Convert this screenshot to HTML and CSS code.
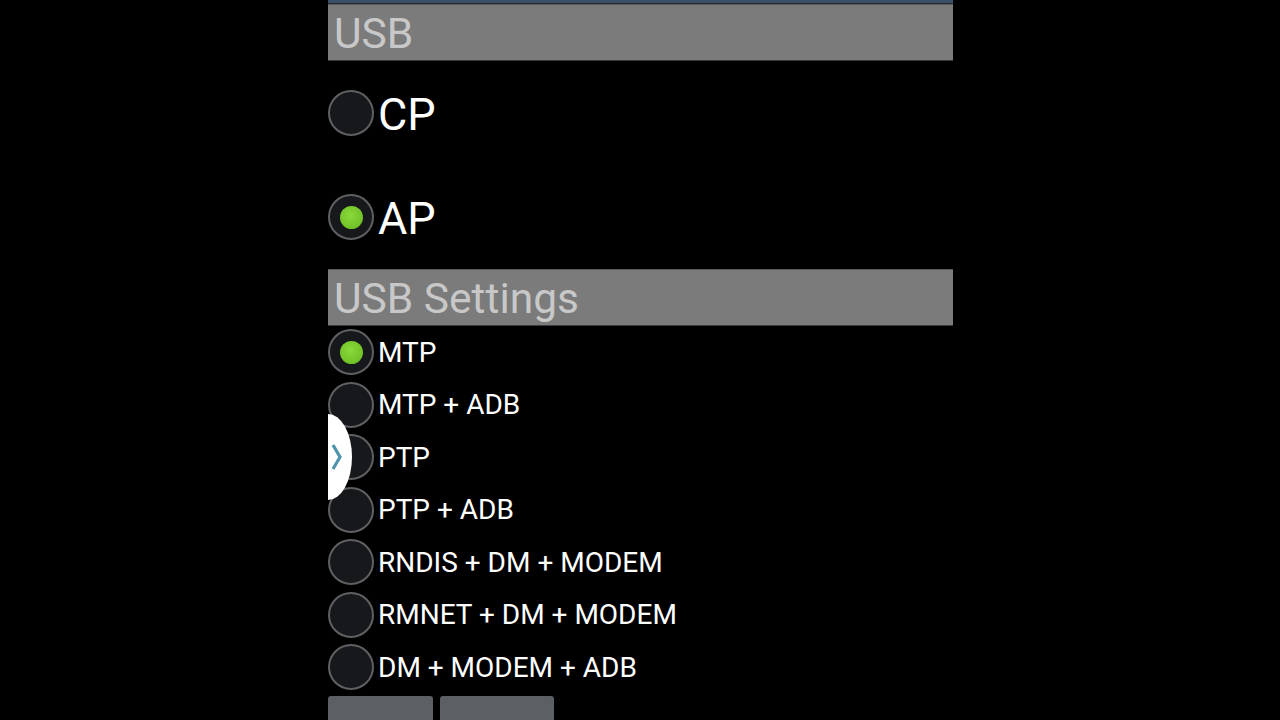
FILE: index.html
```html
<!DOCTYPE html>
<html>
<head>
<meta charset="utf-8">
<link rel="stylesheet" href="styles.css">
</head>
<body>
<div class="screen">
  <div class="topbar"></div>
  <div class="section-header">USB</div>
  <div class="big-row"><span class="radio"></span><span class="big-label">CP</span></div>
  <div class="big-row"><span class="radio checked"></span><span class="big-label">AP</span></div>
  <div class="section-header">USB Settings</div>
  <div class="list">
    <div class="row"><span class="radio checked"></span><span class="label">MTP</span></div>
    <div class="row"><span class="radio"></span><span class="label">MTP + ADB</span></div>
    <div class="row"><span class="radio"></span><span class="label">PTP</span></div>
    <div class="row"><span class="radio"></span><span class="label">PTP + ADB</span></div>
    <div class="row"><span class="radio"></span><span class="label">RNDIS + DM + MODEM</span></div>
    <div class="row"><span class="radio"></span><span class="label">RMNET + DM + MODEM</span></div>
    <div class="row"><span class="radio"></span><span class="label">DM + MODEM + ADB</span></div>
  </div>
  <div class="buttons">
    <div class="btn btn-a"></div>
    <div class="btn btn-b"></div>
  </div>
  <div class="handle">
    <svg width="12" height="26" viewBox="0 0 12 26"><path d="M2 1 L9 13 L2 25" fill="none" stroke="#4f93ad" stroke-width="3.2"/></svg>
  </div>
</div>
</body>
</html>
```

FILE: styles.css
```css
html, body {
  margin: 0;
  padding: 0;
  background: #000;
  width: 1280px;
  height: 720px;
  overflow: hidden;
  font-family: Roboto, "Noto Sans", sans-serif;
}
.screen {
  position: relative;
  width: 625px;
  margin-left: 328px;
  height: 720px;
  display: flex;
  flex-direction: column;
}
.screen > * {
  flex: none;
}
.topbar {
  height: 3px;
  background: #3a5068;
  border-bottom: 1px solid #222a33;
}
.section-header {
  height: 57px;
  box-sizing: border-box;
  background: #7b7b7b;
  border-top: 1px solid #5a5a5a;
  border-bottom: 1px solid #3a3a3a;
  color: #c8c8c8;
  font-size: 42.5px;
  line-height: 58px;
  padding-left: 6px;
  overflow: hidden;
}
.big-row {
  height: 104px;
  display: flex;
  align-items: center;
  gap: 4px;
}
.big-label {
  color: #fff;
  font-size: 45px;
  line-height: 1;
  padding-top: 2px;
}
.list {
  display: flex;
  flex-direction: column;
}
.row {
  height: 52.5px;
  display: flex;
  align-items: center;
  gap: 4px;
}
.label {
  color: #fff;
  font-size: 28px;
  line-height: 1;
  padding-top: 1px;
}
.radio {
  width: 46px;
  height: 46px;
  box-sizing: border-box;
  border-radius: 50%;
  background: #17181c;
  border: 2px solid #5f6062;
  display: flex;
  align-items: center;
  justify-content: center;
  flex: none;
}
.radio.checked::after {
  content: "";
  width: 23px;
  height: 23px;
  border-radius: 50%;
  background: radial-gradient(circle at 45% 40%, #8ad83c 0%, #74c62a 60%, #5fae1e 100%);
}
.buttons {
  display: flex;
  gap: 7px;
  margin-top: 2px;
}
.btn {
  height: 40px;
  background: #5b6065;
  border-radius: 3px;
}
.btn-a { width: 105px; }
.btn-b { width: 114px; }
.handle {
  position: absolute;
  left: -24px;
  top: 414px;
  width: 48px;
  height: 86px;
  border-radius: 50%;
  background: #fff;
  clip-path: inset(0 0 0 24px);
  display: flex;
  align-items: center;
  justify-content: flex-end;
  padding-right: 9px;
  box-sizing: border-box;
}
```
